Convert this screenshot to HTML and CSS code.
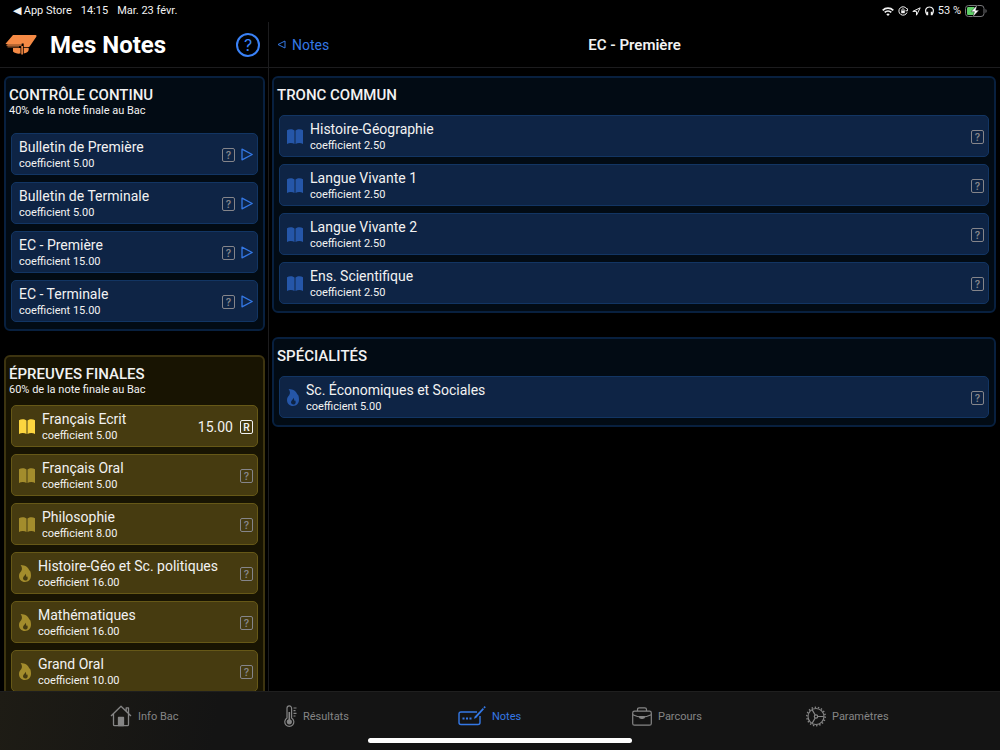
FILE: index.html
```html
<!DOCTYPE html>
<html lang="fr">
  <head>
    <meta charset="UTF-8" />
    <meta name="viewport" content="width=device-width, initial-scale=1.0" />
    <title>Mes Notes</title>
    <link rel="stylesheet" href="styles.css">
  </head>

  <body>
    <!-- Icônes partagées -->
    <svg class="sprite" aria-hidden="true">
      <symbol id="book" viewBox="0 0 16 15">
        <path d="M7.5 1.4C5.5-.2 2-.2 0 1.2V15c2-1.300 5.500-1.300 7.500 0zM8.500 1.400C10.500-.2 14-.2 16 1.200V15c-2-1.300-5.500-1.300-7.500 0z" />
      </symbol>
      <symbol id="flame" viewBox="0 0 12 17">
        <path fill-rule="evenodd" d="M1.600 0C6.500 0 10 2.800 10.300 6c.2-.2.300-.5.300-.9C11.600 6.700 12 8.600 12 10.600 12 14.500 9.500 17 6 17s-6-2.400-6-6C0 8.500 1.300 7.300 2.300 6 3.500 4.200 3 1.800 1.600 0zM6.300 8.700c.1 1.700-2.300 2.500-2.300 4.600 0 1.300 1 2.200 2.300 2.200s2.400-.9 2.400-2.300c0-.9-.3-1.500-.7-2-.1.400-.3.600-.6.700C7.300 10.800 7 9.500 6.300 8.700z" />
      </symbol>
      <symbol id="play" viewBox="0 0 12 13">
        <path d="M1 1.200L11.200 6.500 1 11.800z" fill="none" stroke="currentColor" stroke-width="1.300" stroke-linejoin="round" />
      </symbol>
    </svg>

    <div class="status">
      <div class="status-left">
        <a href="#" class="back-app">◀ App Store</a>
        <span>14:15</span>
        <span>Mar. 23 févr.</span>
      </div>
      <div class="status-right">
        <svg width="12" height="9" viewBox="0 0 12 9" fill="none" stroke="currentColor" stroke-width="1.700">
          <path d="M.7 3.300c3-3 7.600-3 10.600 0M2.700 5.400c1.900-1.800 4.700-1.800 6.600 0" />
          <path d="M6 9L4.300 7.200c1-.9 2.400-.9 3.400 0z" fill="currentColor" stroke="none" />
        </svg>
        <svg width="10" height="10" viewBox="0 0 10 10" fill="none" stroke="currentColor">
          <path d="M8.800 3A4.200 4.200 0 1 0 9 6.500M9.600 2.500v2.300H7.500" />
          <path d="M3.900 5V3.800a1.100 1.100 0 0 1 2.200 0V5" stroke-width=".8" />
          <rect x="3.200" y="4.600" width="3.600" height="2.600" fill="currentColor" stroke="none" />
        </svg>
        <svg width="9" height="9" viewBox="0 0 9 9" fill="none" stroke="currentColor" stroke-linejoin="round">
          <path d="M8.200.8L.8 4.400h3.700v3.800z" />
        </svg>
        <svg width="9" height="10" viewBox="0 0 9 10" fill="none" stroke="currentColor" stroke-width="1.200">
          <path d="M1.800 8.500C-.8 4 1.300 1 4.500 1s5.300 3 2.700 7.500" />
          <path d="M2.300 5.700v3.500M6.700 5.700v3.500" stroke-width="1.800" />
        </svg>
        <span>53 %</span>
        <svg class="battery" width="22" height="12" viewBox="0 0 22 12">
          <rect x=".5" y=".5" width="18.500" height="11" rx="3" fill="none" stroke="#77777a" />
          <path d="M20.500 4v4c1.500-.6 1.500-3.400 0-4z" fill="#77777a" />
          <path d="M3.500 2H9.500v8H3.500C2.500 10 2 9.500 2 8.500v-5C2 2.500 2.500 2 3.500 2z" fill="#5fd068" />
          <path d="M12.300 0L6 6.700h3.400L7.700 12 14 5.200h-3.300z" fill="#fff" stroke="#000" stroke-width=".4" />
        </svg>
      </div>
    </div>

    <div class="columns">
      <aside class="sidebar">
        <header class="bar">
          <svg class="logo" width="32" height="21" viewBox="0 0 32 21">
            <path d="M8 1h22.500c1 0 1.300.8.8 1.700l-6.500 9.500c-.5.700-1 1-1.800 1H18.700V9.500h-2v1.300H3L.5 9.800z" fill="#f58a45" />
            <path d="M1.500 11.600H16.500M2.500 12.900H14" fill="none" stroke="#f58a45" stroke-width=".8" />
            <path d="M8 14h7.500v5.600c-3 .4-5.800-.3-7.500-2zM18.700 14h5v1.800c-.3 2.300-2.200 3.400-5 3.700zM16.300 12h1.600v8.500h-1.600z" fill="#f58a45" />
          </svg>
          <h1>Mes Notes</h1>
          <button class="help" aria-label="Aide">?</button>
        </header>

        <main class="scroll">
          <section class="panel blue">
            <h2>CONTRÔLE CONTINU</h2>
            <p class="weight">40% de la note finale au Bac</p>
            <ul class="links">
              <li><a class="row" href="#"><span class="text"><b>Bulletin de Première</b><small>coefficient 5.00</small></span><span class="box">?</span><svg class="play"><use href="#play" /></svg></a></li>
              <li><a class="row" href="#"><span class="text"><b>Bulletin de Terminale</b><small>coefficient 5.00</small></span><span class="box">?</span><svg class="play"><use href="#play" /></svg></a></li>
              <li><a class="row" href="#"><span class="text"><b>EC - Première</b><small>coefficient 15.00</small></span><span class="box">?</span><svg class="play"><use href="#play" /></svg></a></li>
              <li><a class="row" href="#"><span class="text"><b>EC - Terminale</b><small>coefficient 15.00</small></span><span class="box">?</span><svg class="play"><use href="#play" /></svg></a></li>
            </ul>
          </section>

          <section class="panel gold">
            <h2>ÉPREUVES FINALES</h2>
            <p class="weight">60% de la note finale au Bac</p>
            <ul>
              <li><a class="row done" href="#"><svg class="book"><use href="#book" /></svg><span class="text"><b>Français Ecrit</b><small>coefficient 5.00</small></span><span class="mark">15.00</span><span class="box">R</span></a></li>
              <li><a class="row" href="#"><svg class="book"><use href="#book" /></svg><span class="text"><b>Français Oral</b><small>coefficient 5.00</small></span><span class="box">?</span></a></li>
              <li><a class="row" href="#"><svg class="book"><use href="#book" /></svg><span class="text"><b>Philosophie</b><small>coefficient 8.00</small></span><span class="box">?</span></a></li>
              <li><a class="row" href="#"><svg class="flame"><use href="#flame" /></svg><span class="text"><b>Histoire-Géo et Sc. politiques</b><small>coefficient 16.00</small></span><span class="box">?</span></a></li>
              <li><a class="row" href="#"><svg class="flame"><use href="#flame" /></svg><span class="text"><b>Mathématiques</b><small>coefficient 16.00</small></span><span class="box">?</span></a></li>
              <li><a class="row" href="#"><svg class="flame"><use href="#flame" /></svg><span class="text"><b>Grand Oral</b><small>coefficient 10.00</small></span><span class="box">?</span></a></li>
            </ul>
          </section>
        </main>
      </aside>

      <div class="detail">
        <header class="bar">
          <a href="#" class="back">
            <svg width="9" height="9" viewBox="0 0 9 9" fill="none" stroke="currentColor"><path d="M8 1L1 4.500 8 8z" /></svg>
            Notes
          </a>
          <h3>EC - Première</h3>
        </header>

        <div class="scroll">
          <section class="panel blue">
            <h2>TRONC COMMUN</h2>
            <ul>
              <li><a class="row" href="#"><svg class="book"><use href="#book" /></svg><span class="text"><b>Histoire-Géographie</b><small>coefficient 2.50</small></span><span class="box">?</span></a></li>
              <li><a class="row" href="#"><svg class="book"><use href="#book" /></svg><span class="text"><b>Langue Vivante 1</b><small>coefficient 2.50</small></span><span class="box">?</span></a></li>
              <li><a class="row" href="#"><svg class="book"><use href="#book" /></svg><span class="text"><b>Langue Vivante 2</b><small>coefficient 2.50</small></span><span class="box">?</span></a></li>
              <li><a class="row" href="#"><svg class="book"><use href="#book" /></svg><span class="text"><b>Ens. Scientifique</b><small>coefficient 2.50</small></span><span class="box">?</span></a></li>
            </ul>
          </section>

          <section class="panel blue">
            <h2>SPÉCIALITÉS</h2>
            <ul>
              <li><a class="row" href="#"><svg class="flame"><use href="#flame" /></svg><span class="text"><b>Sc. Économiques et Sociales</b><small>coefficient 5.00</small></span><span class="box">?</span></a></li>
            </ul>
          </section>
        </div>
      </div>
    </div>

    <nav class="tabs">
      <a href="#">
        <svg width="22" height="22" viewBox="0 0 22 22" fill="none" stroke="currentColor" stroke-width="1.300" stroke-linejoin="round">
          <path d="M1 11L11 1.200 21 11M3.500 9v10.500c0 .8.400 1.200 1.200 1.200h12.600c.8 0 1.200-.4 1.200-1.200V9M16.200 6V2.800h2.300V8.200" />
          <path d="M8.500 20.500v-8h5v8z" fill="currentColor" />
        </svg>
        Info Bac
      </a>
      <a href="#">
        <svg width="13" height="22" viewBox="0 0 13 22" fill="none" stroke="currentColor" stroke-width="1.200">
          <path d="M3 13V3.200a2.300 2.300 0 0 1 4.600 0V13a4.500 4.500 0 1 1-4.600 0z" />
          <circle cx="5.300" cy="16.800" r="2" fill="currentColor" />
          <path d="M5.300 7v9" stroke-width="1.600" />
          <path d="M9.500 3H12.500M9.500 5.700H11.500M9.500 8.300H12.500M9.500 11H11.500" />
        </svg>
        Résultats
      </a>
      <a href="#" class="active">
        <svg width="28" height="20" viewBox="0 0 28 20" fill="none" stroke="currentColor" stroke-width="1.400">
          <path d="M19 6H3Q1 6 1 8v8.500q0 2 2 2h17q2 0 2-2V10" />
          <path d="M24.800 2L16.800 10.500l-1 2.300 2.300-.9L26 3.300z" fill="currentColor" stroke="none" />
          <path d="M26 .7l1.200 1.200" stroke-width="1.700" />
          <path d="M4.500 12.500h2M8 12.500h2M11.500 12.500h2" stroke-width="2" />
        </svg>
        Notes
      </a>
      <a href="#">
        <svg width="20" height="19" viewBox="0 0 20 19" fill="none" stroke="currentColor" stroke-width="1.200">
          <rect x=".7" y="4.200" width="18.600" height="14" rx="1.800" />
          <path d="M5.500 4V2.500Q5.500.8 7.200.8h5.600q1.700 0 1.700 1.700V4M.8 7.800Q10 12.500 19.200 7.800" />
          <path d="M7.800 9.500h4.400v1.300q-2.200 1.200-4.400 0z" fill="currentColor" />
        </svg>
        Parcours
      </a>
      <a href="#">
        <svg width="20" height="21" viewBox="0 0 20 21" fill="none" stroke="currentColor" stroke-width="1.200">
          <circle cx="10" cy="10.500" r="8" />
          <circle cx="10" cy="10.500" r="9.200" stroke-width="1.500" stroke-dasharray="1.400 1.812" />
          <circle cx="10" cy="10.500" r="1.700" />
          <path d="M11.700 10.500h6M9.200 9L6.200 3.900M9.200 12L6.200 17.100" />
        </svg>
        Paramètres
      </a>
    </nav>
    <div class="home"></div>
  </body>
</html>
```
FILE: styles.css
```css
* {
  box-sizing: border-box;
}

body {
  margin: 0;
  height: 100vh;
  display: flex;
  flex-direction: column;
  overflow: hidden;
  background-color: #000;
  color: #f2f2f2;
  font-family: Roboto, "Liberation Sans", sans-serif;
  font-size: 11px;
}

a {
  color: inherit;
  text-decoration: none;
}

h1,
h2,
h3,
p,
ul {
  margin: 0;
  padding: 0;
}

ul {
  list-style: none;
}

svg {
  flex: none;
}

.sprite {
  position: absolute;
  width: 0;
  height: 0;
}

/* barre d'état */
.status {
  display: flex;
  justify-content: space-between;
  height: 22px;
  padding: 0 13px;
  line-height: 22px;
}

.status-left {
  display: flex;
  gap: 9px;
}

.status-right {
  display: flex;
  align-items: center;
  gap: 4px;
}

/* colonnes */
.columns {
  flex: 1;
  min-height: 0;
  display: flex;
}

.sidebar,
.detail {
  display: flex;
  flex-direction: column;
  min-width: 0;
}

.sidebar {
  width: 269px;
  border-right: 1px solid #1c1c1e;
}

.detail {
  flex: 1;
}

.bar {
  flex: none;
  display: flex;
  align-items: center;
  height: 46px;
  border-bottom: 1px solid #1c1c1e;
}

.sidebar .bar {
  gap: 13px;
  padding: 0 8px 0 5px;
}

h1 {
  flex: 1;
  font-size: 24px;
  font-weight: 700;
  color: #fff;
}

.help {
  width: 24px;
  height: 24px;
  padding: 0;
  border: 2px solid #3a82f7;
  border-radius: 50%;
  background: none;
  color: #3a82f7;
  font-family: Inter, sans-serif;
  font-size: 16px;
  line-height: 20px;
}

.detail .bar {
  display: grid;
  grid-template-columns: 1fr auto 1fr;
  padding: 0 8px;
}

.back {
  display: flex;
  align-items: center;
  gap: 6px;
  color: #3478e5;
  font-size: 14px;
}

h3 {
  font-size: 15px;
  font-weight: 600;
}

.scroll {
  flex: 1;
  min-height: 0;
  overflow: hidden;
  padding: 8px 3px 0 4px;
}

.detail .scroll {
  padding: 8px 4px 0 3px;
}

/* panneaux */
.panel {
  margin-bottom: 24px;
  padding: 8px 5px 7px;
  border: 2px solid #08203f;
  border-radius: 6px;
}

.blue {
  --fill: #0e2445;
  --line: #123563;
  --icon: #2556a8;
  background-color: #020b14;
}

.gold {
  --fill: #463b10;
  --line: #665817;
  --icon: #a38c2c;
  background-color: #181402;
  border-color: #3d3410;
}

h2 {
  margin-left: -2px;
  font-size: 15px;
  line-height: 18px;
  font-weight: 500;
}

.weight {
  margin-left: -2px;
  font-size: 11px;
  line-height: 14px;
}

.panel ul {
  display: flex;
  flex-direction: column;
  gap: 7px;
  margin-top: 8px;
}

.panel .links {
  margin-top: 15px;
}

.detail .panel ul {
  margin-top: 11px;
}

.row {
  display: flex;
  align-items: center;
  padding: 4px 4px 3px 7px;
  border: 1px solid var(--line);
  border-radius: 5px;
  background-color: var(--fill);
}

.text {
  flex: 1;
  white-space: nowrap;
}

.row b {
  display: block;
  font-size: 14px;
  font-weight: 400;
  line-height: 18px;
}

.row small {
  display: block;
  font-size: 11px;
  line-height: 15px;
}

.book,
.flame {
  margin-right: 7px;
  fill: var(--icon);
}

.book {
  width: 16px;
  height: 15px;
}

.flame {
  width: 12px;
  height: 17px;
}

.play {
  width: 12px;
  height: 13px;
  margin-left: 6px;
  color: #3478e5;
}

.box {
  width: 13px;
  height: 14px;
  border: 1px solid #85858a;
  border-radius: 2px;
  color: #85858a;
  font-family: Inter, sans-serif;
  font-size: 10px;
  font-weight: 600;
  line-height: 12px;
  text-align: center;
}

.mark {
  margin-right: 7px;
  font-size: 14px;
}

.done .book {
  fill: #fcd53f;
}

.done .box {
  border-color: #f2f2f2;
  color: #f2f2f2;
}

/* onglets */
.tabs {
  flex: none;
  display: grid;
  grid-template-columns: repeat(5, 1fr);
  height: 59px;
  padding: 0 2% 10px 11%;
  border-top: 1px solid #1f1f1f;
  background: linear-gradient(100deg, #1e1c15, #141414 22%);
  color: #858585;
}

.tabs a {
  display: flex;
  align-items: center;
  gap: 6px;
}

.tabs .active {
  color: #3478e5;
}

.home {
  position: absolute;
  bottom: 7px;
  left: 50%;
  width: 264px;
  height: 5px;
  margin-left: -132px;
  border-radius: 3px;
  background-color: #fff;
}
```
